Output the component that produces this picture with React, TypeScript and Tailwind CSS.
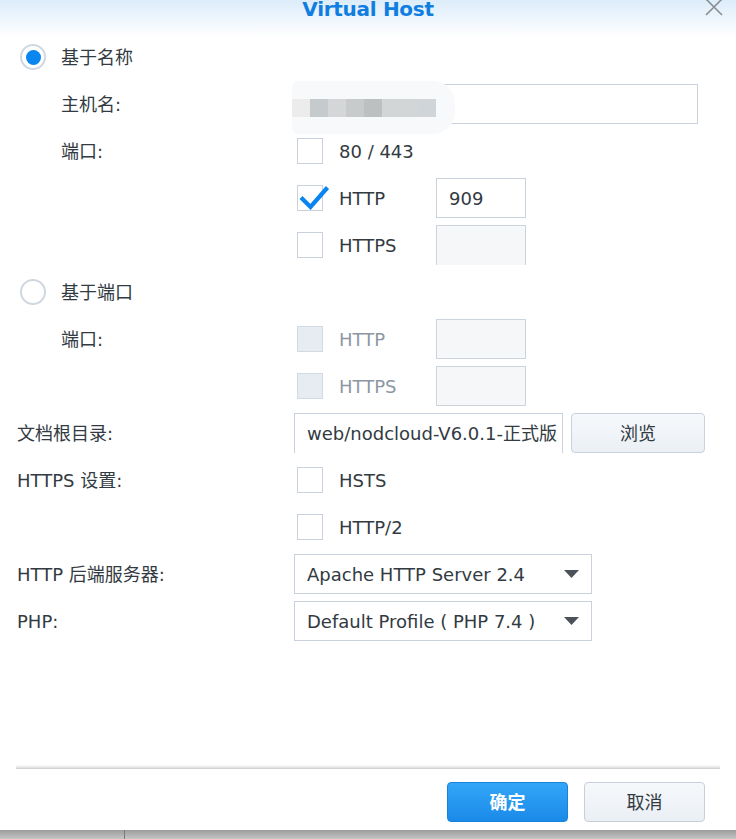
import React from "react";

const TEXT = "text-[#323a42]";

function Radio({ checked }: { checked?: boolean }) {
  return (
    <div className="ml-[3px] flex h-[26px] w-[26px] shrink-0 items-center justify-center rounded-full border-2 border-[#cfd7e0] bg-white">
      {checked ? <div className="h-[15px] w-[15px] rounded-full bg-[#0a86f0]" /> : null}
    </div>
  );
}

function Checkbox({ checked, disabled }: { checked?: boolean; disabled?: boolean }) {
  return (
    <div
      className={
        disabled
          ? "relative h-[26px] w-[26px] shrink-0 border border-[#d2dae3] bg-[#e7ecf2]"
          : "relative h-[26px] w-[26px] shrink-0 border border-[#c9d2dc] bg-white"
      }
    >
      {checked ? (
        <svg
          className="absolute left-[-1px] top-[-1px] overflow-visible"
          width="32"
          height="28"
          viewBox="0 0 32 28"
        >
          <path d="M4 12.5 L13.5 22 L30.5 2.5" fill="none" stroke="#0a84ef" strokeWidth="4.2" />
        </svg>
      ) : null}
    </div>
  );
}

function CheckLabel({
  label,
  checked,
  disabled,
}: {
  label: string;
  checked?: boolean;
  disabled?: boolean;
}) {
  return (
    <div className="flex w-[142px] shrink-0 items-center gap-4 pl-[3px]">
      <Checkbox checked={checked} disabled={disabled} />
      <span className={disabled ? "text-[#8c97a3]" : TEXT}>{label}</span>
    </div>
  );
}

function Row({
  label,
  indent,
  children,
}: {
  label?: React.ReactNode;
  indent?: boolean;
  children?: React.ReactNode;
}) {
  return (
    <div className="flex h-10 items-center">
      <div className={indent ? "w-[277px] shrink-0 pl-[44px]" : "w-[277px] shrink-0"}>{label}</div>
      {children}
    </div>
  );
}

function PortInput({ value, disabled, noBottom }: { value?: string; disabled?: boolean; noBottom?: boolean }) {
  const base = disabled ? "bg-[#f5f7f9] border-[#ccd5de]" : "bg-white border-[#c9d2dc]";
  return (
    <div
      className={
        noBottom
          ? `flex h-10 w-[90px] items-center border border-b-0 px-3 ${base}`
          : `flex h-10 w-[90px] items-center border px-3 ${base}`
      }
    >
      {value}
    </div>
  );
}

function Select({ value }: { value: string }) {
  return (
    <div className="flex h-10 w-[298px] items-center justify-between border border-[#c9d2dc] bg-white pl-3 pr-3">
      <span className="whitespace-nowrap">{value}</span>
      <svg width="15" height="8" viewBox="0 0 15 8">
        <path d="M0 0 H15 L7.5 8 Z" fill="#4b5259" />
      </svg>
    </div>
  );
}

export default function App() {
  return (
    <div
      className={`flex h-[839px] w-[736px] flex-col overflow-hidden bg-white font-['DejaVu_Sans','Noto_Sans_CJK_SC',sans-serif] text-[18px] ${TEXT}`}
    >
      {/* header */}
      <div className="relative h-[37px] shrink-0 bg-gradient-to-b from-[#dcecfa] to-white">
        <div className="mt-[-1px] text-center text-[20px] font-bold leading-none tracking-[-0.3px] text-[#0f7ee0]">
          Virtual Host
        </div>
        <svg className="absolute right-[13px] top-[-1px]" width="18" height="17" viewBox="0 0 18 17">
          <path d="M1 0 L17 16 M17 0 L1 16" stroke="#8a8d90" strokeWidth="1.6" />
        </svg>
      </div>

      {/* form */}
      <div className="flex flex-col gap-[7px] pl-[17px]">
        <Row
          label={
            <div className="flex items-center gap-[15px]">
              <Radio checked />
              <span>基于名称</span>
            </div>
          }
        />
        <Row label="主机名:" indent>
          <div className="relative h-10 w-[404px] border border-[#c9d2dc] bg-white">
            <div className="absolute left-[-3px] top-[-4px] h-[53px] w-[163px] rounded-l-[6px] rounded-r-[22px] bg-[#f8f9fa]">
              <div className="absolute left-0 top-[18px] flex h-[18px]">
                <div className="w-[18px] bg-[#ececec]" />
                <div className="w-[18px] bg-[#c5cacc]" />
                <div className="w-[18px] bg-[#d4d6d7]" />
                <div className="w-[18px] bg-[#c7cbcc]" />
                <div className="w-[18px] bg-[#bcc0c1]" />
                <div className="w-[18px] bg-[#d3d6d7]" />
                <div className="w-[18px] bg-[#d3d6d7]" />
                <div className="w-[18px] bg-[#d0d5d9]" />
              </div>
            </div>
          </div>
        </Row>
        <Row label="端口:" indent>
          <CheckLabel label="80 / 443" />
        </Row>
        <Row indent>
          <CheckLabel label="HTTP" checked />
          <PortInput value="909" />
        </Row>
        <Row indent>
          <CheckLabel label="HTTPS" />
          <PortInput disabled noBottom />
        </Row>
        <Row
          label={
            <div className="flex items-center gap-[15px]">
              <Radio />
              <span>基于端口</span>
            </div>
          }
        />
        <Row label="端口:" indent>
          <CheckLabel label="HTTP" disabled />
          <PortInput disabled />
        </Row>
        <Row indent>
          <CheckLabel label="HTTPS" disabled />
          <PortInput disabled />
        </Row>
        <Row label="文档根目录:">
          <div className="flex h-10 w-[269px] items-center overflow-hidden whitespace-nowrap border border-b-0 border-[#c9d2dc] bg-white pl-3">
            web/nodcloud-V6.0.1-正式版
          </div>
          <div className="ml-2 flex h-10 w-[134px] items-center justify-center rounded-[4px] border border-[#c8d2dd] bg-gradient-to-b from-[#f6f8fb] to-[#ebf0f5]">
            浏览
          </div>
        </Row>
        <Row label="HTTPS 设置:">
          <CheckLabel label="HSTS" />
        </Row>
        <Row>
          <CheckLabel label="HTTP/2" />
        </Row>
        <Row label="HTTP 后端服务器:">
          <Select value="Apache HTTP Server 2.4" />
        </Row>
        <Row label="PHP:">
          <Select value="Default Profile ( PHP 7.4 )" />
        </Row>
      </div>

      {/* footer */}
      <div className="mt-auto flex flex-col">
        <div className="mx-4 h-[4px] bg-gradient-to-b from-white to-[#dddddd] border-b border-[#d2d2d2]" />
        <div className="mr-[31px] mt-[13px] flex justify-end gap-4">
          <div className="flex h-10 w-[121px] items-center justify-center rounded-[4px] border border-[#1a82da] bg-gradient-to-b from-[#33a6f8] to-[#1a8ae8] font-semibold text-white">
            确定
          </div>
          <div className="flex h-10 w-[121px] items-center justify-center rounded-[4px] border border-[#c5d0db] bg-gradient-to-b from-[#f6f8fb] to-[#eaeff4]">
            取消
          </div>
        </div>
        <div className="mt-2 flex h-[9px] bg-gradient-to-b from-[#9c9c9c] to-[#c6c6c6]">
          <div className="w-[125px] border-r border-[#7a7a7a]" />
        </div>
      </div>
    </div>
  );
}
